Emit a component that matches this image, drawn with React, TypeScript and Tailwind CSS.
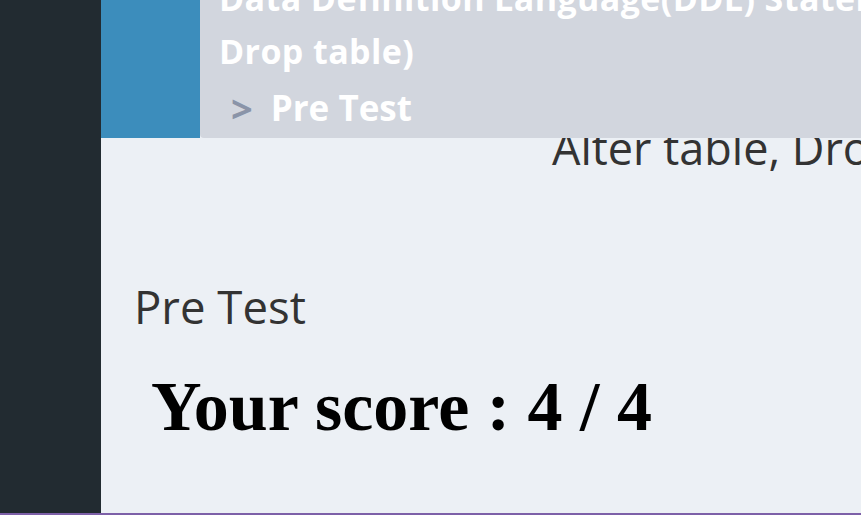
import React from 'react';

const App: React.FC = () => {
  return (
    <div className="flex h-[515px] w-[861px] overflow-hidden border-b-2 border-[#7d60a8] bg-[#ecf0f5]">
      {/* sidebar */}
      <aside className="w-[101px] shrink-0 bg-[#222b31]" />

      <main className="flex min-w-0 flex-1 flex-col font-['Open_Sans',sans-serif] text-[#333]">
        {/* header bar, sits over the page title */}
        <header className="relative z-10 flex h-[138px] shrink-0">
          <div className="w-[99px] shrink-0 bg-[#3c8dbc]" />
          <div className="flex flex-1 flex-col justify-end overflow-hidden rounded-bl-[4px] bg-[#d2d6de] pb-[10px] pl-[19px] font-bold text-white">
            <div className="text-[34px] leading-[53px] tracking-[0.4px]">
              <div className="whitespace-nowrap">Data Definition Language(DDL) Statements (Create table, Alter table,</div>
              <div>Drop table)</div>
            </div>
            <div className="mt-[10px] flex items-center text-[35px] leading-[40px]">
              <span className="ml-[12px] mr-[18px] text-[38px] leading-[40px] text-[#8a94a8]">&gt;</span>
              <span>Pre Test</span>
            </div>
          </div>
        </header>

        {/* page content */}
        <section className="flex flex-col">
          <h2 className="mt-[-17px] whitespace-nowrap pl-[451px] text-[45px] leading-[54px] font-normal">
            Alter table, Drop table)
          </h2>
          <h3 className="mt-[104px] pl-[33px] text-[45.5px] leading-[54px] font-normal">Pre Test</h3>
          <h1 className="mt-[32px] pl-[50px] font-['Liberation_Serif',serif] text-[70px] font-bold leading-[84px] text-black">
            Your score : 4 / 4
          </h1>
        </section>
      </main>
    </div>
  );
};

export default App;
